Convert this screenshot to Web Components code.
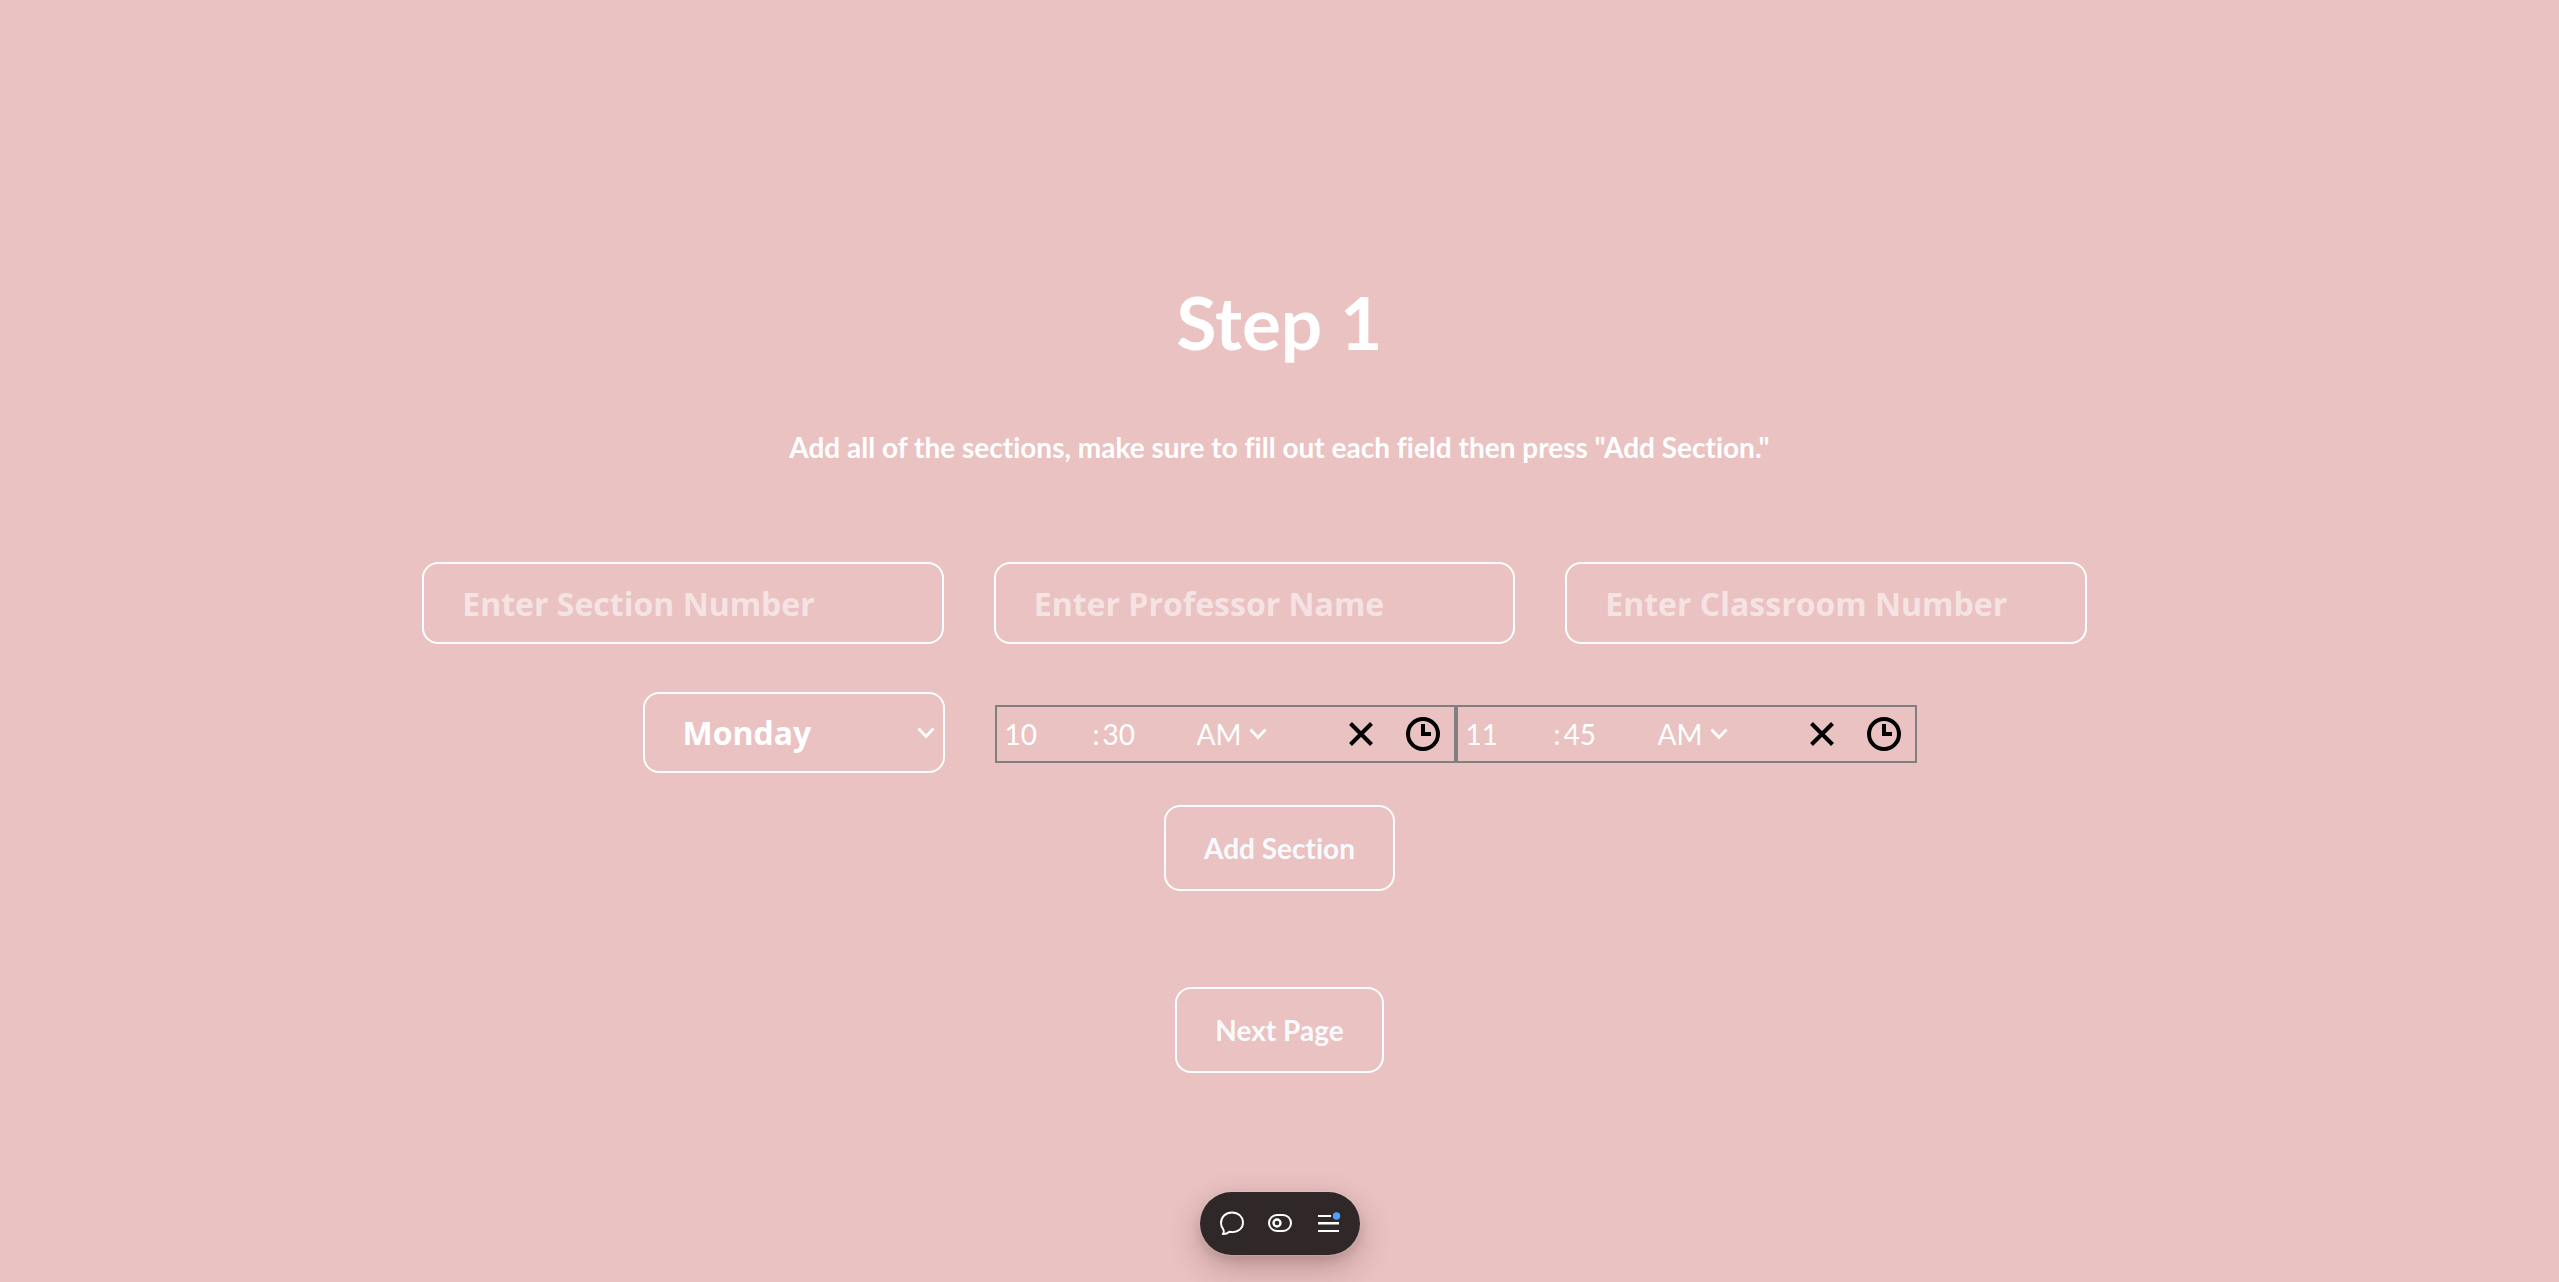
<!DOCTYPE html>
<html lang="en">
<head>
<meta charset="utf-8">
<title>Step 1</title>
<style>
html, body { margin: 0; min-height: 100%; background: #eac2c2; }
body { font-family: Lato, "Liberation Sans", sans-serif; color: #fff; font-variant-ligatures: none; }
</style>
</head>
<body>
<schedule-step></schedule-step>
<page-toolbar></page-toolbar>
<script>
const define = (name, html, setup) => customElements.define(name, class extends HTMLElement {
  constructor() {
    super();
    this.attachShadow({ mode: 'open' });
  }
  connectedCallback() {
    if (this.shadowRoot.childNodes.length) return;
    const t = document.createElement('template');
    t.innerHTML = html;
    this.shadowRoot.append(t.content.cloneNode(true));
    if (setup) setup(this, this.shadowRoot);
  }
});

define('text-field', `
<style>
:host { display: block; }
input { box-sizing: border-box; width: 100%; height: 82px; margin: 0; padding: 0 38px; display: block;
  border: 2px solid #fff; border-radius: 16px; background: transparent; color: #fff;
  font: bold 32px "Open Sans", "Noto Sans", sans-serif; outline: 0; }
input::placeholder { color: #fff; opacity: .55; }
</style>
<input type="text">`, (host, root) => {
  const i = root.querySelector('input');
  i.placeholder = host.getAttribute('placeholder');
  i.setAttribute('aria-label', i.placeholder);
});

define('day-select', `
<style>
:host { display: grid; align-items: center; }
select, svg { grid-area: 1 / 1; }
select { appearance: none; box-sizing: border-box; width: 302px; height: 81px; margin: 0; padding: 0 38px;
  border: 2px solid #fff; border-radius: 16px; background: transparent; color: #fff;
  font: bold 32px "Open Sans", "Noto Sans", sans-serif; }
option { color: #333; }
svg { justify-self: end; margin-right: 10px; pointer-events: none; }
</style>
<select aria-label="Day">
<option>Monday</option><option>Tuesday</option><option>Wednesday</option><option>Thursday</option><option>Friday</option>
</select>
<svg width="18" height="12" viewBox="0 0 18 12" fill="none" stroke="#fff" stroke-width="2.8"><path d="M1.500 1.500 9 9.500l7.500-8"/></svg>`);

define('time-field', `
<style>
:host { box-sizing: border-box; display: flex; align-items: center; width: 461px; height: 58px;
  border: 2px solid #808080; padding: 0 14px 0 8px; font-size: 28px; }
input, select { appearance: none; margin: 0; padding: 0; border: 0; background: transparent; color: #fff; font: inherit; outline: 0; }
input { width: 88px; height: 40px; appearance: textfield; }
input.minute { width: 94px; }
input::-webkit-inner-spin-button { appearance: none; margin: 0; }
.colon { width: 10px; }
.meridiem { display: grid; align-items: center; width: 70px; }
.meridiem > * { grid-area: 1 / 1; }
.meridiem svg { justify-self: end; pointer-events: none; }
select { height: 40px; width: 100%; }
option { color: #333; }
.actions { margin-left: auto; display: flex; gap: 28px; }
button { display: flex; margin: 0; padding: 0; border: 0; background: none; }
</style>
<input class="hour" type="number" aria-label="Hour"><span class="colon">:</span>
<input class="minute" type="number" aria-label="Minute">
<span class="meridiem"><select aria-label="AM or PM"><option>AM</option><option>PM</option></select>
<svg width="18" height="12" viewBox="0 0 18 12" fill="none" stroke="#fff" stroke-width="2.8"><path d="M1.500 1.500 9 9.500l7.500-8"/></svg></span>
<span class="actions">
<button type="button" aria-label="Clear time"><svg width="34" height="34" viewBox="0 0 34 34" stroke="#000" stroke-width="4"><path d="M6.500 6.500l21 21M27.500 6.500l-21 21"/></svg></button>
<button type="button" aria-label="Open clock"><svg width="34" height="34" viewBox="0 0 34 34" fill="none" stroke="#000" stroke-width="4"><circle cx="17" cy="17" r="15"/><path d="M17 7v10h8"/></svg></button>
</span>`, (host, root) => {
  root.querySelector('.hour').value = host.getAttribute('hour');
  root.querySelector('.minute').value = host.getAttribute('minute');
});

define('outline-button', `
<style>
:host { display: block; }
button { display: block; margin: 0; height: 86px; padding: 0 38px; border: 2px solid #fff; border-radius: 16px;
  background: transparent; color: #f9fafe; font: bold 28px Lato, sans-serif; font-variant-ligatures: none; }
</style>
<button type="button"><slot></slot></button>`);

define('page-toolbar', `
<style>
:host { position: fixed; bottom: 27px; left: 0; right: 0; display: flex; justify-content: center; pointer-events: none; }
nav { pointer-events: auto; box-sizing: border-box; display: flex; align-items: center; gap: 20px; height: 63px; padding: 0 18px 2px;
  border-radius: 32px; background: #302728; box-shadow: 0 0 2px rgba(255,255,255,.5), 0 12px 32px rgba(60,20,20,.28), 0 4px 12px rgba(60,20,20,.12); }
button { display: flex; margin: 0; padding: 0; border: 0; background: none; }
</style>
<nav aria-label="Page tools">
<button type="button" aria-label="Comments"><svg width="28" height="28" viewBox="0 0 28 28" fill="none" stroke="#fff" stroke-width="1.9" stroke-linejoin="round"><path d="M5.200 20.200C3.700 18.400 3 16.300 3 14 3 7.900 7.700 3.500 14 3.500S25 7.900 25 13.400c0 5.700-4.600 9.700-10.600 9.700-1 0-2-.2-3-.4-1.800 1.700-3.700 2.500-6.700 2.400 1.200-1.300 1.300-3.300.5-4.900z"/></svg></button>
<button type="button" aria-label="Visibility"><svg width="28" height="28" viewBox="0 0 28 28" fill="none" stroke="#fff"><rect x="3" y="6" width="22" height="16" rx="8" stroke-width="2"/><circle cx="11" cy="14" r="3.500" stroke-width="2.400"/></svg></button>
<button type="button" aria-label="Menu, new items"><svg width="28" height="28" viewBox="0 0 28 28"><g fill="#fff"><rect x="4" y="6" width="13" height="2"/><rect x="4" y="13" width="21" height="2.500"/><rect x="4" y="21" width="21" height="2"/></g><circle cx="22.500" cy="7" r="3.700" fill="#4d9fff"/></svg></button>
</nav>`);

define('schedule-step', `
<style>
:host { display: block; padding: 276px 0 210px; }
main { display: flex; flex-direction: column; align-items: center; }
h1 { margin: 0; font-size: 73px; line-height: 92px; font-weight: 700; }
p { margin: 59px 0 95px; font-size: 28px; line-height: 40px; font-weight: 700; }
.row { display: flex; justify-content: center; }
.fields { gap: 50px; width: 67%; padding-right: 50px; box-sizing: border-box; }
.fields text-field { flex: 1; }
.times { align-items: baseline; margin: 48px 0 32px; }
day-select { margin-right: 50px; }
.next { margin-top: 96px; }
</style>
<main>
<h1>Step 1</h1>
<p>Add all of the sections, make sure to fill out each field then press "Add Section."</p>
<div class="row fields">
<text-field placeholder="Enter Section Number"></text-field>
<text-field placeholder="Enter Professor Name"></text-field>
<text-field placeholder="Enter Classroom Number"></text-field>
</div>
<div class="row times">
<day-select></day-select>
<time-field hour="10" minute="30"></time-field>
<time-field hour="11" minute="45"></time-field>
</div>
<outline-button>Add Section</outline-button>
<outline-button class="next">Next Page</outline-button>
</main>`);
</script>
</body>
</html>
